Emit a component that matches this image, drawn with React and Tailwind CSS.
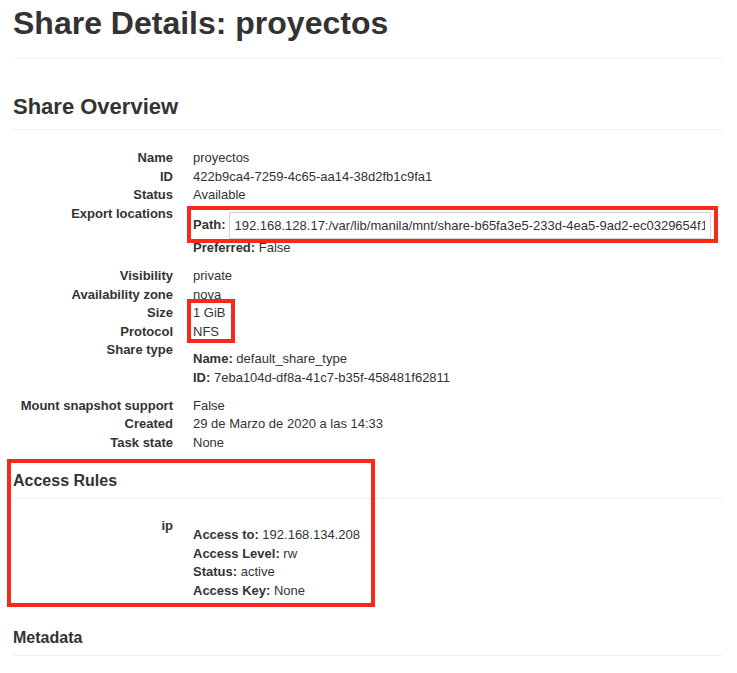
import React from "react";

function Row({ label, children, className = "" }) {
  return (
    <div className={"flex " + className}>
      <dt className="w-[160px] shrink-0 text-right font-bold">{label}</dt>
      <dd className="ml-[20px] min-w-0">{children}</dd>
    </div>
  );
}

export default function App() {
  const path =
    "192.168.128.17:/var/lib/manila/mnt/share-b65fa3e5-233d-4ea5-9ad2-ec0329654f1e";
  return (
    <div
      className="relative min-h-[673px] bg-white pt-[6px] pl-[13px] pr-[15px] text-[#333] text-[13px] leading-[18.6px]"
      style={{ fontFamily: '"Liberation Sans", Arial, sans-serif' }}
    >
      <h1 className="pb-[17px] border-b border-[#eee] text-[32px] leading-[35.2px] font-bold">
        Share Details: proyectos
      </h1>

      <h2 className="mt-[36px] pb-[10px] border-b border-[#eee] text-[22px] leading-[24px] font-bold">
        Share Overview
      </h2>

      <dl className="mt-[19px]">
        <Row label="Name">proyectos</Row>
        <Row label="ID">422b9ca4-7259-4c65-aa14-38d2fb1c9fa1</Row>
        <Row label="Status">Available</Row>
        <Row label="Export locations">
          <div className="mt-[7px] mb-[9.5px]">
            <div className="flex items-center">
              <span className="font-bold">Path:</span>
              <input
                readOnly
                value={path}
                className="ml-[3px] h-[27px] w-[482px] border border-[#d4d4d4] bg-white px-[5px] text-[13px] text-[#333] outline-none"
                style={{ fontFamily: '"Liberation Sans", Arial, sans-serif' }}
              />
            </div>
            <div>
              <span className="font-bold">Preferred:</span> False
            </div>
          </div>
        </Row>
        <Row label="Visibility">private</Row>
        <Row label="Availability zone">nova</Row>
        <Row label="Size">1 GiB</Row>
        <Row label="Protocol">NFS</Row>
        <Row label="Share type">
          <div className="mt-[9px] mb-[9px]">
            <div>
              <span className="font-bold">Name:</span> default_share_type
            </div>
            <div>
              <span className="font-bold">ID:</span> 7eba104d-df8a-41c7-b35f-458481f62811
            </div>
          </div>
        </Row>
        <Row label="Mount snapshot support">False</Row>
        <Row label="Created">29 de Marzo de 2020 a las 14:33</Row>
        <Row label="Task state">None</Row>
      </dl>

      <h3 className="mt-[20px] pb-[8px] border-b border-[#eee] text-[16px] leading-[17.6px] font-bold">
        Access Rules
      </h3>

      <dl className="mt-[18px]">
        <Row label="ip">
          <div className="mt-[9px] mb-[9px]">
            <div>
              <span className="font-bold">Access to:</span> 192.168.134.208
            </div>
            <div>
              <span className="font-bold">Access Level:</span> rw
            </div>
            <div>
              <span className="font-bold">Status:</span> active
            </div>
            <div>
              <span className="font-bold">Access Key:</span> None
            </div>
          </div>
        </Row>
      </dl>

      <h3 className="mt-[20px] pb-[8px] border-b border-[#eee] text-[16px] leading-[17.6px] font-bold">
        Metadata
      </h3>

      {/* annotation boxes */}
      <div className="pointer-events-none absolute left-[187px] top-[206px] h-[37px] w-[531px] border-[4px] border-[#f52a1c]" />
      <div className="pointer-events-none absolute left-[187px] top-[299px] h-[44px] w-[48px] border-[4px] border-[#f52a1c]" />
      <div className="pointer-events-none absolute left-[7px] top-[459px] h-[148px] w-[368px] border-[4px] border-[#f52a1c]" />
    </div>
  );
}
